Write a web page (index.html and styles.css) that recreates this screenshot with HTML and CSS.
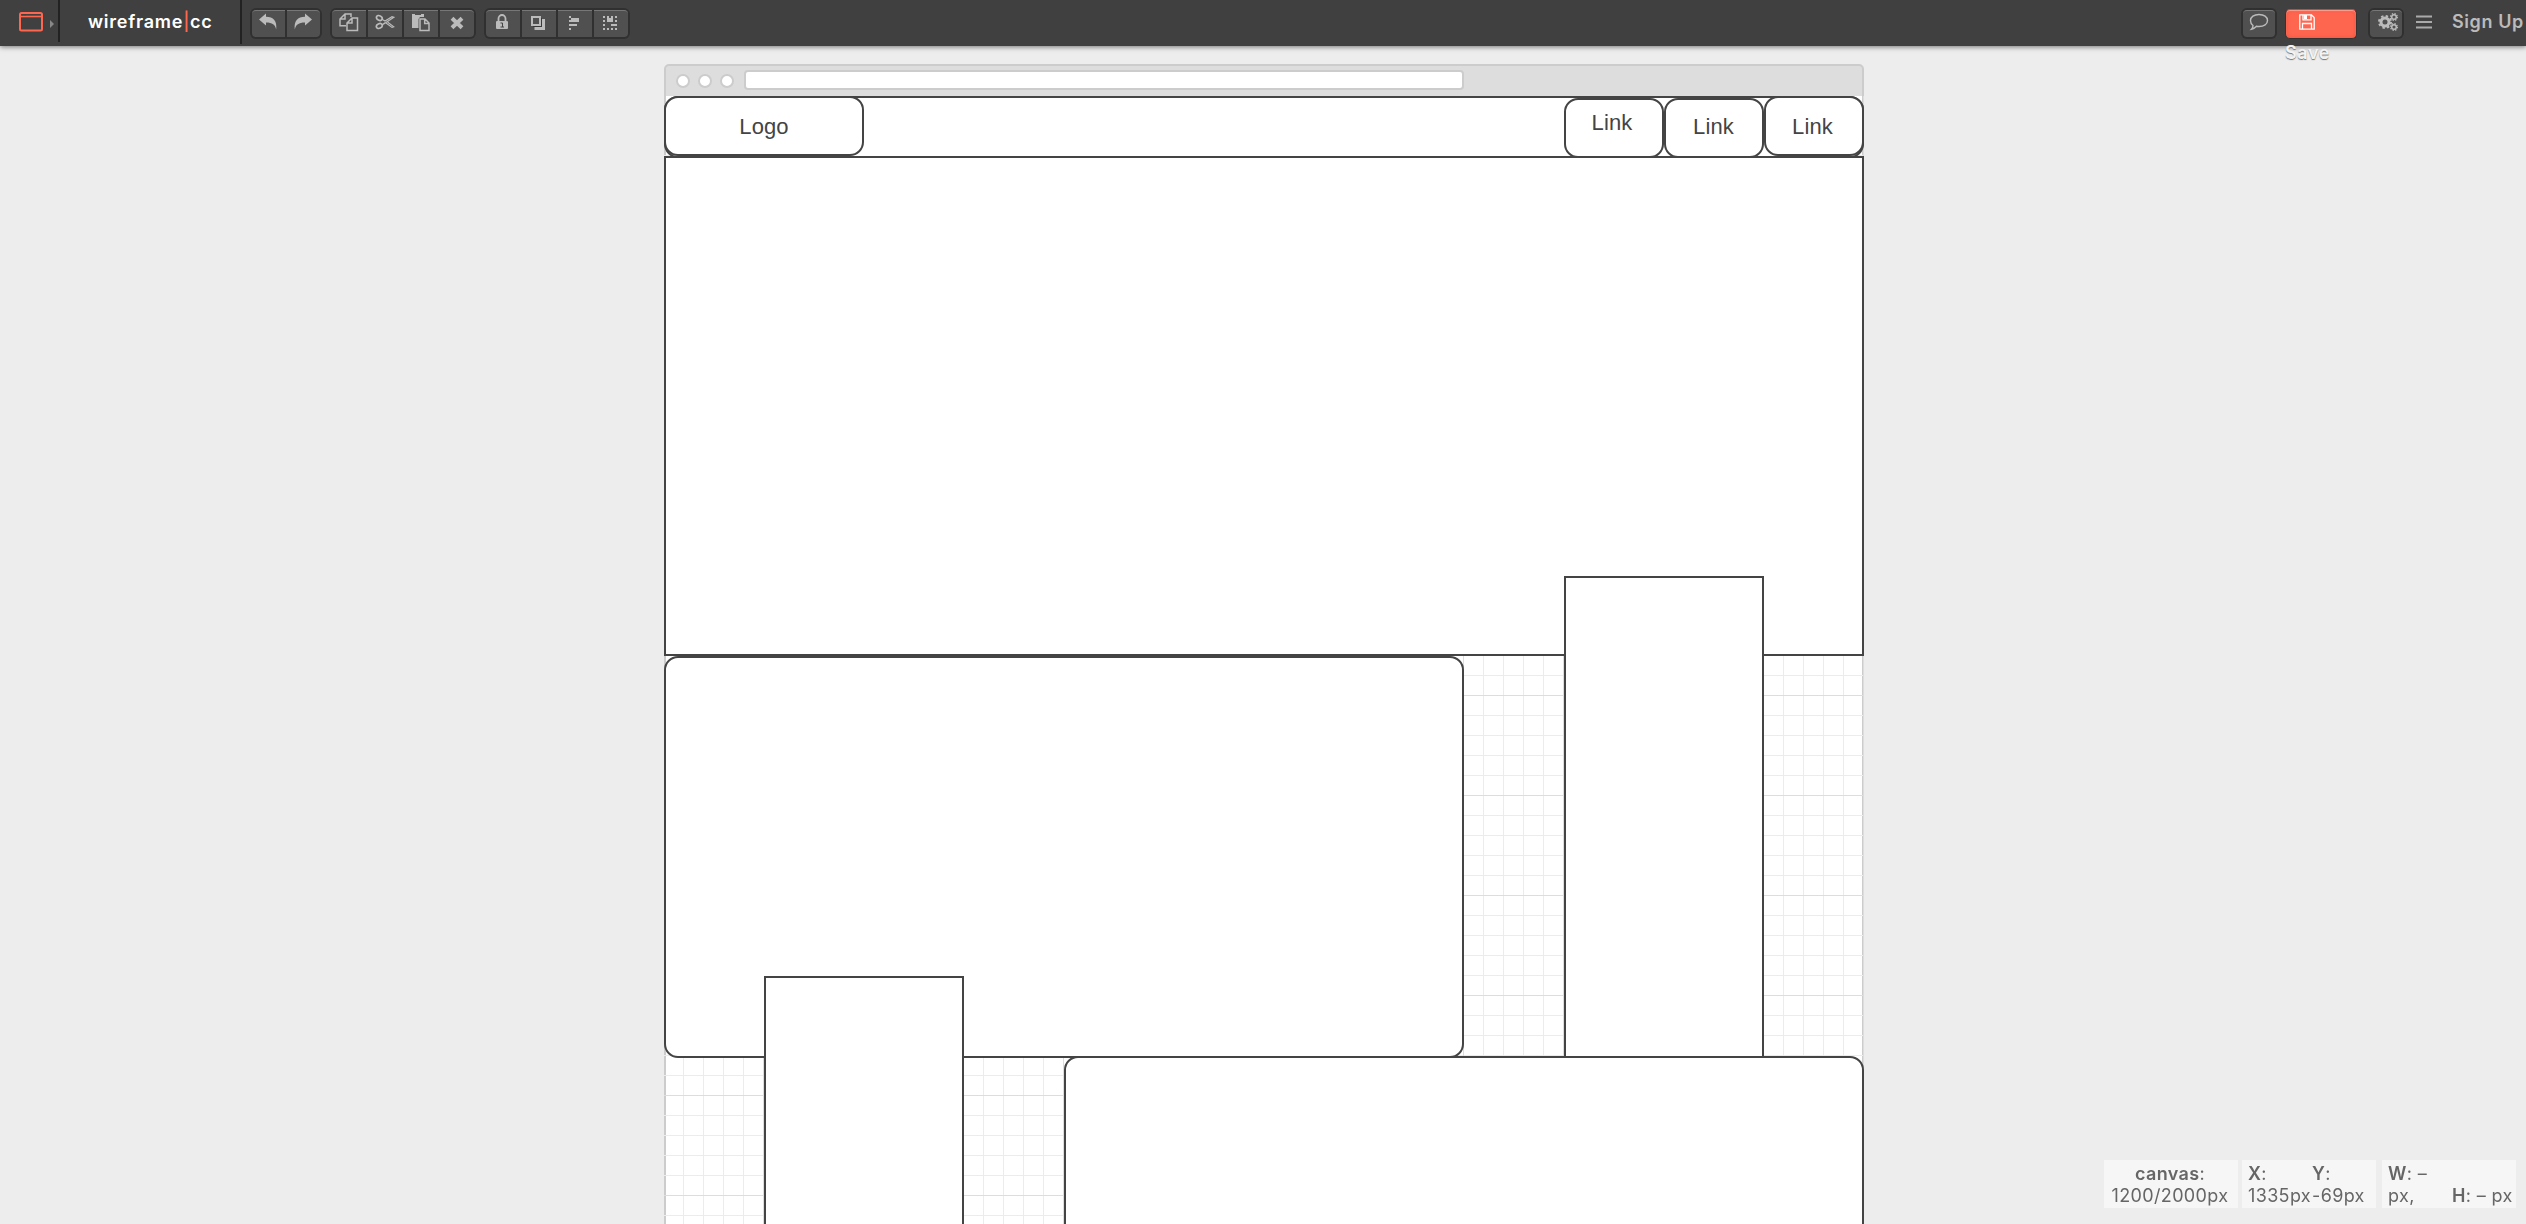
FILE: index.html
```html
<!DOCTYPE html>
<html lang="en">
<head>
<meta charset="utf-8">
<title>wireframe|cc</title>
<link rel="stylesheet" href="styles.css">
</head>
<body>
<header class="toolbar">
  <div class="template">
    <svg width="24" height="20" viewBox="0 0 24 20" fill="none" stroke="#ff6650" stroke-width="2"><rect x="1" y="1" width="22" height="17.5" rx="1.5"/><path d="M1 4.5h22" stroke-width="1.6"/><path d="M3 2.8h1.5M5.5 2.8h1.5" stroke="#404040" stroke-width="1"/></svg>
    <i class="arrow"></i>
  </div>
  <div class="brand"><span>wireframe<b>|</b>cc</span></div>
  <div class="group history">
    <button class="btn"><svg width="20" height="18" viewBox="0 0 20 18"><path d="M1 6.500 8 .500v3.300c7.500 0 11.200 4.200 10.200 12.700-1.200-5-3.800-7-10.200-7v3z" fill="#bbb"/></svg></button>
    <button class="btn"><svg width="20" height="18" viewBox="0 0 20 18"><path d="M19 6.500 12 .5v3.300c-7.500 0-11.200 4.200-10.200 12.700 1.200-5 3.800-7 10.200-7v3z" fill="#bbb"/></svg></button>
  </div>
  <div class="group edit">
    <button class="btn"><svg width="20" height="20" viewBox="0 0 20 20" fill="none" stroke="#bbb" stroke-width="1.5"><path d="M7 13.700H1V7l5-5h6v3M6 2v5H1M13 6h5.500v12.500H8V11zM13 6v5H8"/></svg></button>
    <button class="btn"><svg width="20" height="18" viewBox="0 0 20 18" fill="none" stroke="#bbb"><ellipse cx="4.300" cy="5" rx="3" ry="2.300" stroke-width="1.700" transform="rotate(25 4.300 5)"/><ellipse cx="4.300" cy="13" rx="3" ry="2.300" stroke-width="1.700" transform="rotate(-25 4.300 13)"/><path d="M7 6.300 10 8l7-4.300 1.800.6L9.500 10.500 7 12M7 11.700 10 9.600M11 10l6 4.500 1.800-.7-6-4.500" stroke-width="1.100"/></svg></button>
    <button class="btn"><svg width="20" height="20" viewBox="0 0 20 20"><path d="M1 2h12v3H9L7.500 7v9H1z" fill="#bbb"/><path d="M4 2.500h6" stroke="#505050"/><path d="M9 7h5l4 4v7.500H9zM13.700 7v4.500H18" fill="#505050" stroke="#bbb" stroke-width="1.500"/></svg></button>
    <button class="btn"><svg width="14" height="14" viewBox="0 0 14 14"><path d="m2 2.300 10 9.400M12 2.300 2 11.700" stroke="#bbb" stroke-width="4"/></svg></button>
  </div>
  <div class="group arrange">
    <button class="btn"><svg width="12" height="16" viewBox="0 0 12 16"><path d="M2.500 8V4.500a3.500 3.500 0 0 1 7 0V8" fill="none" stroke="#bbb" stroke-width="1.800"/><rect y="7" width="12" height="8" rx="1" fill="#bbb"/><path d="M4.500 9h2v4M4.500 13h3.500" stroke="#444" fill="none"/></svg></button>
    <button class="btn"><svg width="16" height="16" viewBox="0 0 16 16"><path d="M12 5.500h1.500v8H6V12" fill="none" stroke="#bbb" stroke-width="3"/><path d="M2 2h8v8H2z" fill="#505050" stroke="#bbb" stroke-width="2"/><path d="M11.500 3v8.500H3" fill="none" stroke="#383838"/></svg></button>
    <button class="btn"><svg width="12" height="16" viewBox="0 0 12 16" fill="#bbb"><path d="M1 1h2v2H1zM3 3h8v4H3zM1 5h2v2H1zM1 9h8v2H1zM1 13h2v2H1z"/></svg></button>
    <button class="btn"><svg width="16" height="16" viewBox="0 0 16 16" fill="#bbb"><path d="M1 1h2v2H1zM5 1h2v2h2V1h2v6H5zM13 1h2v2h-2zM1 5h2v2H1zM13 5h2v2h-2zM1 9h2v2H1zM9 9h6v2H9zM1 13h2v2H1zM5 13h2v2H5zM9 13h2v2H9zM13 13h2v2h-2z"/></svg></button>
  </div>
  <div class="right">
    <div class="group"><button class="btn"><svg width="20" height="18" viewBox="0 0 20 18"><path d="M10 1.500c5 0 8.500 2.500 8.500 6s-3.500 6-8.500 6c-1 0-1.700 0-2.500-.2C6 15 4 16 2.500 16.200c1-1 1.500-2.300 1.500-3.700-1.700-1.200-2.500-3-2.500-5 0-3.500 3.500-6 8.500-6z" fill="none" stroke="#bbb" stroke-width="1.400"/></svg></button></div>
    <div class="save"><svg width="16" height="16" viewBox="0 0 16 16" fill="none" stroke="#fff" stroke-width="1.300"><path d="M.8.8h11.700l2.700 2.700v11.700H.8zM4 .8v5h8v-5M3.500 15V9.500h9V15"/><path d="M5 1v4h3V1z" fill="#fff" stroke="none"/></svg><span class="save-label">Save</span></div>
    <div class="group"><button class="btn gears"><svg width="20" height="18" viewBox="0 0 20 18" fill="none" stroke="#bbb"><circle cx="7" cy="9" r="4" stroke-width="3"/><circle cx="7" cy="9" r="6" stroke-width="2" stroke-dasharray="2.400 2.312"/><circle cx="16" cy="4" r="2.300" stroke-width="1.500"/><circle cx="16" cy="4" r="3.400" stroke-width="1.200" stroke-dasharray="1.400 1.270"/><circle cx="16" cy="14" r="2.300" stroke-width="1.500"/><circle cx="16" cy="14" r="3.400" stroke-width="1.200" stroke-dasharray="1.400 1.270"/></svg></button></div>
    <svg class="menu" width="16" height="14" viewBox="0 0 16 14" stroke="#aaa" stroke-width="2"><path d="M0 1.500h16M0 7h16M0 12.500h16"/></svg>
    <span class="signup">Sign Up</span>
  </div>
</header>
<main class="window">
  <div class="chrome"><i class="dot"></i><i class="dot"></i><i class="dot"></i><i class="address"></i></div>
  <div class="canvas">
    <div class="shape round nav"></div>
    <div class="shape round logo">Logo</div>
    <div class="shape round link link-a"><span>Link</span></div>
    <div class="shape round link link-b">Link</div>
    <div class="shape round link link-c">Link</div>
    <div class="shape hero"></div>
    <div class="shape round panel-left"></div>
    <div class="shape tall-right"></div>
    <div class="shape round panel-right"></div>
    <div class="shape tall-left"></div>
  </div>
</main>
<footer class="status">
  <div class="cell center"><div><b>canvas</b>:</div><div>1200/2000px</div></div>
  <div class="cell pair"><div class="col"><b>X</b>:<br>1335px</div><div class="col"><b>Y</b>:<br>-69px</div></div>
  <div class="cell pair last"><div class="col"><b>W</b>: –<br>px,</div><div class="col"><br><b>H</b>: – px</div></div>
</footer>
</body>
</html>
```
FILE: styles.css
```css
* { box-sizing: border-box; }
html { height: 100%; }
body { display: flex; flex-direction: column; height: 100%; margin: 0; overflow: hidden; background: #ededed; font-family: Inter, "Liberation Sans", sans-serif; }
.toolbar { position: relative; z-index: 2; flex: none; display: flex; align-items: flex-start; height: 46px; background: #404040; box-shadow: 0 1px 5px rgba(0,0,0,.5); }
.toolbar svg { display: block; flex: none; }
.template { display: flex; width: 60px; height: 42px; padding: 12px 0 0 19px; border-right: 2px solid #222; }
.arrow { width: 0; height: 0; margin: 8px 0 0 7px; border: solid transparent; border-width: 4px 0 4px 4px; border-left-color: #888; }
.brand { width: 182px; height: 44px; padding-left: 28px; border-right: 2px solid #222; color: #fff; font-size: 18px; font-weight: 600; line-height: 44px; letter-spacing: .75px; white-space: nowrap; }
.brand b { color: #ff6650; font-weight: 500; }
.group { display: flex; gap: 2px; height: 31px; margin-top: 8px; padding: 2px 2px 3px; border-radius: 6px; background: #303030; }
.btn { display: flex; justify-content: center; align-items: flex-start; width: 34px; height: 27px; margin: 0; padding: 2px 1px 0 0; border: 0; border-top: 1px solid #777; background: #505050; border-radius: 0; }
.btn:first-child { border-radius: 4px 0 0 4px; }
.btn:last-child { border-radius: 0 4px 4px 0; }
.btn:only-child { border-radius: 4px; }
.history { margin-left: 8px; }
.history .btn { width: 33px; padding-right: 2px; }
.edit { margin-left: 8px; }
.edit .btn:first-child, .edit .btn:nth-child(3) { padding-top: 1px; }
.edit .btn:nth-child(4) { padding-top: 5px; }
.arrange { margin-left: 8px; }
.arrange .btn { padding: 4px 2px 0 0; }
.arrange .btn:first-child { padding-top: 3px; }
.right { display: flex; margin-left: auto; }
.right .btn { width: 32px; }
.right .gears { padding: 2px 0 0 3px; }
.save { display: flex; flex-direction: column; width: 72px; height: 30px; margin: 9px 11px 0 8px; padding: 4px 0 0 13px; border: 1px solid #333; border-top-color: #c44; border-radius: 5px; background: #ff6650; box-shadow: inset 0 1px 1px #ffa090, inset 0 0 5px #e95540; }
.save-label { margin: 12px 0 0 -14px; color: #f3f3f3; font-size: 18px; font-weight: 600; line-height: 22px; letter-spacing: .6px; text-shadow: 0 1px 1px #777; }
.menu { margin: 15px 20px 0 12px; }
.signup { width: 74px; color: #bbb; font-size: 18px; font-weight: 600; line-height: 44px; letter-spacing: .6px; white-space: nowrap; }
.window { flex: 1; min-height: 0; display: flex; flex-direction: column; width: 1200px; margin: 18px 0 0 664px; overflow: hidden; }
.chrome { flex: none; display: flex; height: 34px; padding: 8px 10px; gap: 8px; border: 2px solid #ccc; border-radius: 5px 5px 0 0; background: #ddd; }
.dot { flex: none; width: 14px; height: 14px; border: 2px solid #ccc; border-radius: 50%; background: #fff; }
.address { width: 720px; height: 20px; margin: -4px 0 0 2px; border: 2px solid #ccc; border-radius: 4px; background: #fff; }
.canvas { position: relative; flex: 1; min-height: 0; overflow: hidden; margin-top: -2px; background:
  repeating-linear-gradient(to bottom, transparent 0 99px, #ddd 99px 100px),
  repeating-linear-gradient(to right, transparent 0 99px, #ddd 99px 100px),
  repeating-linear-gradient(to bottom, transparent 0 19px, #ececec 19px 20px),
  repeating-linear-gradient(to right, transparent 0 19px, #ececec 19px 20px),
  linear-gradient(to right, #ccc 2px, #fff 2px 1198px, #ccc 1198px); }
.shape { position: absolute; border: 2px solid #444; background: #fff; color: #444; font: 22px "Liberation Sans", Arial, sans-serif; letter-spacing: .1px; }
.round { border-radius: 14px; }
.nav { left: 0; top: 0; width: 1200px; height: 62px; }
.logo { left: 0; top: 0; width: 200px; height: 60px; display: flex; align-items: center; justify-content: center; padding-top: 2px; }
.link { width: 100px; height: 60px; display: flex; align-items: center; justify-content: center; }
.link-a { left: 900px; top: 2px; padding: 0 4px 10px 0; }
.link-b { left: 1000px; top: 2px; padding: 0 1px 2px 0; }
.link-c { left: 1100px; top: 0; padding: 2px 3px 0 0; }
.hero { left: 0; top: 60px; width: 1200px; height: 500px; }
.panel-left { left: 0; top: 560px; width: 800px; height: 402px; }
.tall-right { left: 900px; top: 480px; width: 200px; height: 482px; }
.panel-right { left: 400px; top: 960px; width: 800px; height: 400px; }
.tall-left { left: 100px; top: 880px; width: 200px; height: 480px; }
.status { position: fixed; right: 10px; bottom: 16px; display: flex; height: 48px; color: #666; font-size: 18px; line-height: 22px; letter-spacing: .35px; white-space: nowrap; }
.cell { width: 134px; height: 48px; padding-top: 3px; background: #f6f6f6; margin-left: 4px; }
.center { padding-right: 2px; text-align: center; }
.pair { display: flex; padding-left: 6px; }
.col { width: 66px; }
.last { margin-left: 6px; }
.status b { font-weight: 600; }
```
